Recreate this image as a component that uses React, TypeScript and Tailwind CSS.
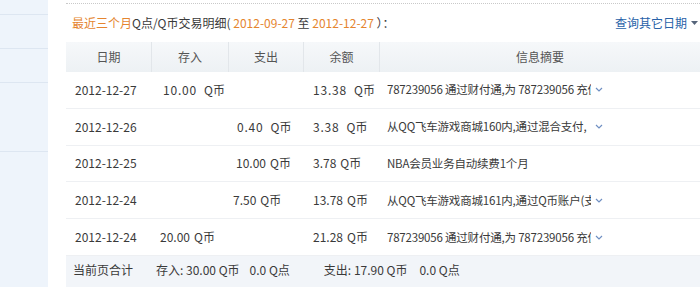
import React from "react";

type Row = {
  date: string;
  inAmt?: string;
  inCls?: string;
  outAmt?: string;
  outCls?: string;
  bal: string;
  wide?: boolean;
  info: string;
  more?: boolean;
};

const rows: Row[] = [
  { date: "2012-12-27", inAmt: "10.00", inCls: "pl-[11px]", bal: "13.38", wide: true, info: "787239056 通过财付通,为 787239056 充值", more: true },
  { date: "2012-12-26", outAmt: "0.40", outCls: "pl-[8px]", bal: "3.38", wide: true, info: "从QQ飞车游戏商城160内,通过混合支付,", more: true },
  { date: "2012-12-25", outAmt: "10.00", outCls: "pl-[7px]", bal: "3.78", info: "NBA会员业务自动续费1个月" },
  { date: "2012-12-24", outAmt: "7.50", outCls: "pl-[4px]", bal: "13.78", info: "从QQ飞车游戏商城161内,通过Q币账户(支付", more: true },
  { date: "2012-12-24", inAmt: "20.00", inCls: "pl-[8px]", bal: "21.28", info: "787239056 通过财付通,为 787239056 充值", more: true },
];

const Amt = ({ v, wide }: { v: string; wide?: boolean }) => (
  <span className="flex items-center whitespace-nowrap">
    <span className={wide ? "tracking-[0.8px]" : ""}>{v}</span>
    <span className={wide ? "ml-[7px]" : "ml-[4px]"}>Q币</span>
  </span>
);

const Chevron = () => (
  <svg width="8" height="5" viewBox="0 0 8 5" className="ml-[4px] shrink-0">
    <polyline points="1,1 4,4 7,1" fill="none" stroke="#6f8fc2" strokeWidth="1.2" />
  </svg>
);

export default function App() {
  return (
    <div className="w-[700px] h-[287px] overflow-hidden bg-white flex text-[12px] text-[#3a3a3a] font-['Noto_Sans_CJK_SC',sans-serif]">
      {/* sidebar */}
      <div className="w-[48px] shrink-0 bg-[#eef4fb] flex flex-col">
        <div className="h-[15px] border-b border-[#dde6f1]" />
        <div className="h-[34px] border-b border-[#dde6f1]" />
        <div className="h-[34px] border-b border-[#dde6f1]" />
        <div className="h-[69px] border-b border-[#dde6f1]" />
      </div>

      {/* main */}
      <div className="ml-[18px] flex-1 flex flex-col min-w-0">
        <div className="mt-[3px] border-t border-dotted border-[#c9c9c9]" />
        <div className="h-[38px] flex items-center justify-between pl-[6px] pr-[2px]">
          <div className="whitespace-nowrap">
            <span className="text-[#e5852f]">最近三个月</span>
            <span>Q点/Q币交易明细( </span>
            <span className="text-[#e5852f]">2012-09-27</span>
            <span> 至 </span>
            <span className="text-[#e5852f]">2012-12-27</span>
            <span> ）：</span>
          </div>
          <div className="flex items-center text-[#2862a8] whitespace-nowrap">
            查询其它日期
            <svg width="7" height="4" viewBox="0 0 7 4" className="ml-[4px]">
              <polygon points="0,0 7,0 3.5,4" fill="#55647a" />
            </svg>
          </div>
        </div>

        {/* header */}
        <div className="h-[30px] flex bg-linear-to-b from-[#f6f8fa] to-[#edf1f4] text-[#555]">
          <div className="w-[86px] flex items-center justify-center border-r border-[#e2e6ea]">日期</div>
          <div className="w-[77px] flex items-center justify-center border-r border-[#e2e6ea]">存入</div>
          <div className="w-[75px] flex items-center justify-center border-r border-[#e2e6ea]">支出</div>
          <div className="w-[76px] flex items-center justify-center border-r border-[#e2e6ea]">余额</div>
          <div className="flex-1 flex items-center justify-center">信息摘要</div>
        </div>

        {rows.map((r, i) => (
          <div key={i} className="h-[37px] flex items-center border-b border-[#eef0f3]">
            <div className="w-[86px] pl-[9px]">{r.date}</div>
            <div className={"w-[77px] " + (r.inCls ?? "")}>{r.inAmt && <Amt v={r.inAmt} wide={r.wide} />}</div>
            <div className={"w-[75px] " + (r.outCls ?? "")}>{r.outAmt && <Amt v={r.outAmt} wide={r.wide} />}</div>
            <div className="w-[76px] pl-[9px]"><Amt v={r.bal} wide={r.wide} /></div>
            <div className="flex-1 pl-[7px] flex items-center min-w-0 text-[11.5px] tracking-[-0.2px]">
              <span className={"overflow-hidden whitespace-nowrap " + (r.more ? "w-[204px]" : "")}>{r.info}</span>
              {r.more && <Chevron />}
            </div>
          </div>
        ))}

        {/* summary */}
        <div className="h-[31px] pb-[3px] flex items-center bg-[#f2f5f9] whitespace-nowrap">
          <span className="pl-[7px]">当前页合计</span>
          <span className="ml-[23px]">存入: 30.00 Q币</span>
          <span className="ml-[10px]">0.0 Q点</span>
          <span className="ml-[34px]">支出: 17.90 Q币</span>
          <span className="ml-[12px]">0.0 Q点</span>
        </div>
      </div>
    </div>
  );
}
